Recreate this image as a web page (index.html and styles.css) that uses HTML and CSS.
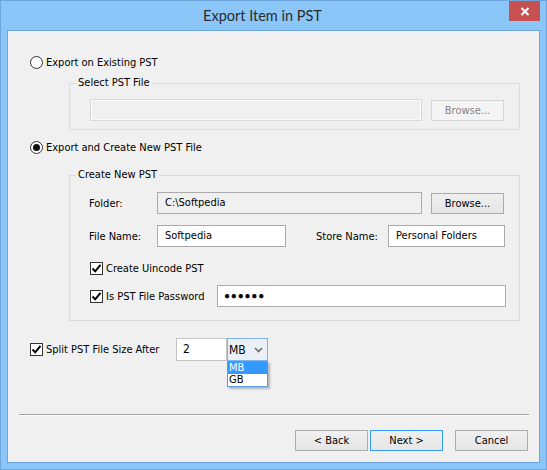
FILE: index.html
```html
<!DOCTYPE html>
<html>
<head>
<meta charset="utf-8">
<link rel="stylesheet" href="styles.css">
</head>
<body>
<div class="window">
  <div class="titlebar">
    <span class="title">Export Item in PST</span>
    <div class="close">
      <svg width="10" height="9" viewBox="0 0 10 9"><path d="M1.5 1 L8.5 8 M8.5 1 L1.5 8" stroke="#fff" stroke-width="2" fill="none"/></svg>
    </div>
  </div>
  <div class="client">
    <div class="opt opt1"><span class="radio"></span><span>Export on Existing PST</span></div>
    <fieldset class="group g1">
      <legend>Select PST File</legend>
      <div class="row r-select">
        <div class="field disabled w-select"></div>
        <div class="btn btn-disabled">Browse...</div>
      </div>
    </fieldset>
    <div class="opt opt2"><span class="radio checked"></span><span>Export and Create New PST File</span></div>
    <fieldset class="group g2">
      <legend>Create New PST</legend>
      <div class="row r-folder">
        <span class="lbl">Folder:</span>
        <div class="field readonly w-folder">C:\Softpedia</div>
        <div class="btn btn-browse">Browse...</div>
      </div>
      <div class="row r-name">
        <span class="lbl">File Name:</span>
        <div class="field w-name">Softpedia</div>
        <span class="lbl lbl-store">Store Name:</span>
        <div class="field w-store">Personal Folders</div>
      </div>
      <div class="row r-unicode">
        <span class="check"><svg width="11" height="11" viewBox="0 0 11 11"><path d="M1.5 5.5 L4.2 8.3 L9.5 1.8" stroke="#000" stroke-width="2" fill="none"/></svg></span>
        <span>Create Uincode PST</span>
      </div>
      <div class="row r-pass">
        <span class="check"><svg width="11" height="11" viewBox="0 0 11 11"><path d="M1.5 5.5 L4.2 8.3 L9.5 1.8" stroke="#000" stroke-width="2" fill="none"/></svg></span>
        <span class="pass-lbl">Is PST File Password</span>
        <div class="field w-pass"><span class="dots">●●●●●●</span></div>
      </div>
    </fieldset>
    <div class="row r-split">
      <span class="check"><svg width="11" height="11" viewBox="0 0 11 11"><path d="M1.5 5.5 L4.2 8.3 L9.5 1.8" stroke="#000" stroke-width="2" fill="none"/></svg></span>
      <span class="split-lbl">Split PST File Size After</span>
      <div class="field w-num">2</div>
      <div class="combo">
        <span>MB</span>
        <svg class="chev" width="9" height="6" viewBox="0 0 9 6"><path d="M1 1 L4.5 4.5 L8 1" stroke="#6d6d6d" stroke-width="1.6" fill="none"/></svg>
        <ul class="droplist">
          <li class="sel">MB</li>
          <li>GB</li>
        </ul>
      </div>
    </div>
    <div class="sep"></div>
    <div class="footer">
      <div class="btn btn-foot">&lt; Back</div>
      <div class="btn btn-foot btn-default">Next &gt;</div>
      <div class="btn btn-foot btn-cancel">Cancel</div>
    </div>
  </div>
</div>
</body>
</html>
```
FILE: styles.css
```css
html, body {
  margin: 0;
  padding: 0;
}
body {
  font-family: "DejaVu Sans Condensed", "Liberation Sans", Arial, sans-serif;
  font-size: 11px;
  color: #000;
}
.window {
  width: 547px;
  height: 470px;
  box-sizing: border-box;
  border: 1px solid #6ea6dc;
  background: #8bc6f8;
  display: flex;
  flex-direction: column;
}
.titlebar {
  height: 29px;
  flex: none;
  display: grid;
  grid-template-columns: 1fr auto 1fr;
}
.title {
  grid-column: 2;
  align-self: center;
  font-family: "Lato", "Noto Sans", sans-serif;
  font-size: 14.5px;
  color: #2b2b2b;
  line-height: 18px;
  margin: 1px 22px 0 0;
}
.close {
  grid-column: 3;
  justify-self: end;
  align-self: start;
  width: 31px;
  height: 20px;
  margin-right: 6px;
  background: #c75050;
  display: flex;
  align-items: center;
  justify-content: center;
}
.client {
  flex: 1;
  margin: 0 6px 6px;
  border: 1px solid #6ea6dc;
  background: #f0f0f0;
  display: flex;
  flex-direction: column;
  position: relative;
}
.opt {
  display: flex;
  align-items: center;
  height: 13px;
  margin-left: 22px;
  line-height: 13px;
}
.opt1 { margin-top: 25px; }
.opt2 { margin-top: 11px; }
.radio {
  width: 11px;
  height: 11px;
  border: 1px solid #333;
  border-radius: 50%;
  background: #fff;
  margin-right: 3px;
  display: flex;
  align-items: center;
  justify-content: center;
}
.radio.checked::after {
  content: "";
  width: 7px;
  height: 7px;
  border-radius: 50%;
  background: #111;
}
.group {
  margin: 7px 19px 0 61px;
  padding: 0;
  border: 1px solid #dcdcdc;
  min-width: 0;
}
.group legend {
  margin-left: 6px;
  padding: 0 2px;
  line-height: 14px;
  height: 14px;
}
.g2 { margin-top: 14px; }
.row {
  display: flex;
  align-items: center;
}
.field {
  box-sizing: border-box;
  height: 22px;
  border: 1px solid #ababab;
  background: #fff;
  padding: 0 0 0 7px;
  line-height: 20px;
  white-space: nowrap;
  overflow: hidden;
}
.field.disabled {
  border-color: #d9d9d9;
  background: #f0f0f0;
  box-shadow: inset 0 0 0 1px #fbfbfb;
}
.field.readonly {
  background: #f0f0f0;
}
.btn {
  box-sizing: border-box;
  height: 21px;
  width: 73px;
  border: 1px solid #acacac;
  background: linear-gradient(#f0f0f0, #e5e5e5);
  display: flex;
  align-items: center;
  justify-content: center;
}
.btn-disabled {
  border-color: #d5d5d5;
  background: #f4f4f4;
  color: #838383;
}
.r-select {
  padding: 9px 0 8px 20px;
}
.w-select { width: 332px; margin-right: 9px; }
.g2 .row { padding-left: 19px; }
.r-folder { margin-top: 10px; }
.lbl { width: 68px; flex: none; }
.w-folder { width: 265px; margin-right: 9px; }
.r-name { margin-top: 11px; }
.w-name { width: 129px; }
.lbl-store { margin-left: 30px; width: 72px; }
.w-store { width: 117px; }
.g2 .r-unicode { margin-top: 15px; padding-left: 20px; height: 13px; }
.g2 .r-pass { margin-top: 10px; padding-left: 20px; height: 22px; margin-bottom: 13px; }
.check {
  box-sizing: border-box;
  width: 13px;
  height: 13px;
  border: 1px solid #333;
  background: #fff;
  margin-right: 3px;
  display: flex;
  align-items: center;
  justify-content: center;
  flex: none;
}
.pass-lbl { width: 111px; }
.w-pass { width: 289px; padding-left: 6px; }
.dots {
  font-size: 10px;
  letter-spacing: 0.8px;
  font-family: "Liberation Sans", sans-serif;
}
.r-split {
  margin: 17px 0 0 22px;
  height: 23px;
}
.split-lbl { width: 130px; }
.w-num { width: 51px; height: 23px; border-color: #c4c4c4; line-height: 21px; padding-left: 6px; font-size: 12px; }
.combo {
  box-sizing: border-box;
  position: relative;
  width: 41px;
  height: 23px;
  border: 1px solid #7eb4ea;
  background: #eaf0f6;
  display: flex;
  align-items: center;
  justify-content: space-between;
  padding: 0 4px 0 1px;
  font-size: 12px;
}
.chev { margin-top: 1px; }
.droplist {
  position: absolute;
  top: 22px;
  left: -1px;
  width: 41px;
  box-sizing: border-box;
  margin: 0;
  padding: 0;
  list-style: none;
  border: 1px solid #569de5;
  background: #fff;
  box-shadow: 2px 2px 2px rgba(0,0,0,0.25);
  font-size: 11px;
}
.droplist li {
  height: 12px;
  line-height: 12px;
  padding-left: 1px;
}
.droplist li.sel {
  background: #3399ff;
  color: #fff;
}
.sep {
  margin: 53px 10px 0 11px;
  border-top: 1px solid #a0a0a0;
  border-bottom: 1px solid #fcfcfc;
}
.footer {
  display: flex;
  justify-content: flex-end;
  margin: 14px 11px 0 0;
}
.btn-default {
  margin-left: 2px;
  border-color: #3399ff;
}
.btn-cancel { margin-left: 12px; }
```
